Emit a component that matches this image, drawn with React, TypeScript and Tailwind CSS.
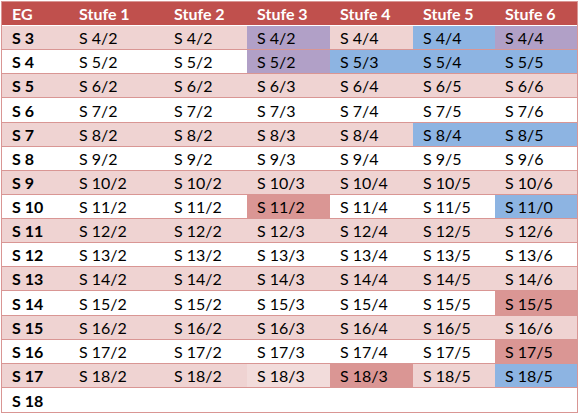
const HEAD = ["EG", "Stufe 1", "Stufe 2", "Stufe 3", "Stufe 4", "Stufe 5", "Stufe 6"];

// p = purple, b = blue, r = dark red, l = light pink
type Mark = "p" | "b" | "r" | "l" | "";

const ROWS: { eg: string; cells: [string, Mark][] }[] = [
  { eg: "S 3", cells: [["S 4/2", ""], ["S 4/2", ""], ["S 4/2", "p"], ["S 4/4", ""], ["S 4/4", "b"], ["S 4/4", "p"]] },
  { eg: "S 4", cells: [["S 5/2", ""], ["S 5/2", ""], ["S 5/2", "p"], ["S 5/3", "b"], ["S 5/4", "b"], ["S 5/5", "b"]] },
  { eg: "S 5", cells: [["S 6/2", ""], ["S 6/2", ""], ["S 6/3", ""], ["S 6/4", ""], ["S 6/5", ""], ["S 6/6", ""]] },
  { eg: "S 6", cells: [["S 7/2", ""], ["S 7/2", ""], ["S 7/3", ""], ["S 7/4", ""], ["S 7/5", ""], ["S 7/6", ""]] },
  { eg: "S 7", cells: [["S 8/2", ""], ["S 8/2", ""], ["S 8/3", ""], ["S 8/4", ""], ["S 8/4", "b"], ["S 8/5", "b"]] },
  { eg: "S 8", cells: [["S 9/2", ""], ["S 9/2", ""], ["S 9/3", ""], ["S 9/4", ""], ["S 9/5", ""], ["S 9/6", ""]] },
  { eg: "S 9", cells: [["S 10/2", ""], ["S 10/2", ""], ["S 10/3", ""], ["S 10/4", ""], ["S 10/5", ""], ["S 10/6", ""]] },
  { eg: "S 10", cells: [["S 11/2", ""], ["S 11/2", ""], ["S 11/2", "r"], ["S 11/4", ""], ["S 11/5", ""], ["S 11/0", "b"]] },
  { eg: "S 11", cells: [["S 12/2", ""], ["S 12/2", ""], ["S 12/3", ""], ["S 12/4", ""], ["S 12/5", ""], ["S 12/6", ""]] },
  { eg: "S 12", cells: [["S 13/2", ""], ["S 13/2", ""], ["S 13/3", ""], ["S 13/4", ""], ["S 13/5", ""], ["S 13/6", ""]] },
  { eg: "S 13", cells: [["S 14/2", ""], ["S 14/2", ""], ["S 14/3", ""], ["S 14/4", ""], ["S 14/5", ""], ["S 14/6", ""]] },
  { eg: "S 14", cells: [["S 15/2", ""], ["S 15/2", ""], ["S 15/3", ""], ["S 15/4", ""], ["S 15/5", ""], ["S 15/5", "r"]] },
  { eg: "S 15", cells: [["S 16/2", ""], ["S 16/2", ""], ["S 16/3", ""], ["S 16/4", ""], ["S 16/5", ""], ["S 16/6", ""]] },
  { eg: "S 16", cells: [["S 17/2", ""], ["S 17/2", ""], ["S 17/3", ""], ["S 17/4", ""], ["S 17/5", ""], ["S 17/5", "r"]] },
  { eg: "S 17", cells: [["S 18/2", ""], ["S 18/2", ""], ["S 18/3", "l"], ["S 18/3", "r"], ["S 18/5", ""], ["S 18/5", "b"]] },
  { eg: "S 18", cells: [] },
];

const MARK_BG: Record<Mark, string> = {
  p: "bg-[#b1a0c7]",
  b: "bg-[#8db4e2]",
  r: "bg-[#da9694]",
  l: "bg-[#f2dcdb]",
  "": "",
};

const GRID = "grid grid-cols-[67px_95px_83px_83px_83px_82px_82px]";

export default function App() {
  return (
    <div className="h-[415px] w-[580px] bg-white pl-[1px] pt-[1px] font-['Lato',sans-serif] text-[16px] text-black">
      <div className="w-[577px] border border-[#d99694]">
        <div className={`${GRID} h-[24px] border-b border-white bg-[#c0504d] font-bold text-white`}>
          {HEAD.map((h) => (
            <div key={h} className="flex items-end pb-[2px] pl-[10px] leading-[18px]">
              {h}
            </div>
          ))}
        </div>
        {ROWS.map((row, i) => (
          <div
            key={row.eg}
            className={`${GRID} h-[24.125px] ${i === ROWS.length - 1 ? "" : "border-b border-[#d99694]"} ${
              i % 2 === 0 ? "bg-[#efd3d2]" : "bg-white"
            }`}
          >
            <div className="flex items-end pb-[2px] pl-[10px] font-bold leading-[18px]">{row.eg}</div>
            {row.cells.map(([v, m], j) => (
              <div key={j} className={`flex items-end pb-[2px] pl-[10px] leading-[18px] ${MARK_BG[m]}`}>
                {v}
              </div>
            ))}
          </div>
        ))}
      </div>
    </div>
  );
}
